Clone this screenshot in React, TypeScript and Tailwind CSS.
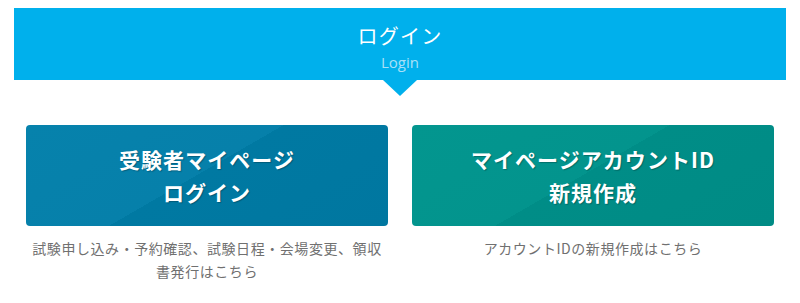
export default function App() {
  return (
    <main
      className="bg-white w-[800px] h-[303px] overflow-hidden"
      style={{ fontFamily: '"Noto Sans CJK JP", "Noto Sans", sans-serif' }}
    >
      {/* Heading */}
      <section className="relative mx-[14px] mt-[8px] bg-[#00b0ec] pt-[14px] pb-[9px] text-center">
        <h1 className="text-white text-[20px] leading-[28px] tracking-[0.06em]">ログイン</h1>
        <p
          className="mt-[3px] text-[15px] leading-[18px] text-[#a9e0f7]"
          style={{ fontFamily: '"Open Sans", sans-serif' }}
        >
          Login
        </p>
        <div className="absolute left-1/2 top-full -translate-x-1/2 w-0 h-0 border-l-[17px] border-r-[17px] border-t-[16px] border-l-transparent border-r-transparent border-t-[#00b0ec]" />
      </section>

      {/* Buttons */}
      <section className="mt-[45px] px-[26px] grid grid-cols-2 gap-[24px]">
        <div>
          <a
            href="#"
            className="flex h-[101px] items-center justify-center rounded-[4px] bg-[linear-gradient(150deg,#0682ac_0%,#0680aa_48%,#0079a2_48%,#0077a0_100%)] text-center text-white font-bold text-[21px] leading-[33px] tracking-[0.05em] [text-shadow:1px_1px_1px_rgba(0,0,0,0.25)]"
          >
            受験者マイページ
            <br />
            ログイン
          </a>
          <p className="mt-[11px] text-center text-[14px] leading-[23px] tracking-[0.04em] text-[#707070]">
            試験申し込み・予約確認、試験日程・会場変更、領収書発行はこちら
          </p>
        </div>
        <div>
          <a
            href="#"
            className="flex h-[101px] items-center justify-center rounded-[4px] bg-[linear-gradient(150deg,#03968f_0%,#03948d_48%,#008d87_48%,#008b85_100%)] text-center text-white font-bold text-[21px] leading-[33px] tracking-[0.05em] [text-shadow:1px_1px_1px_rgba(0,0,0,0.25)]"
          >
            マイページアカウントID
            <br />
            新規作成
          </a>
          <p className="mt-[11px] text-center text-[14px] leading-[23px] tracking-[0.04em] text-[#707070]">
            アカウントIDの新規作成はこちら
          </p>
        </div>
      </section>
    </main>
  );
}
